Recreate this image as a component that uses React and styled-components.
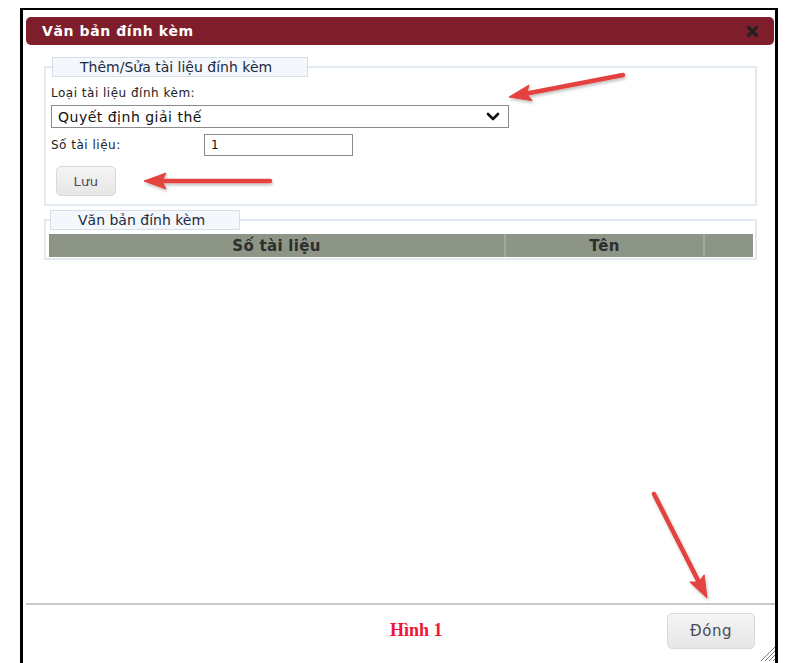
import React from "react";
import styled, { createGlobalStyle } from "styled-components";

const Global = createGlobalStyle`
  html, body { margin: 0; padding: 0; background: #fff; overflow: hidden; }
  body { font-family: "DejaVu Sans", Verdana, sans-serif; }
  * { box-sizing: border-box; }
`;

const Page = styled.div`
  position: relative;
  width: 797px;
  height: 663px;
  padding: 8px 0 0 20px;
  overflow: hidden;
`;

const Frame = styled.div`
  width: 758px;
  height: 665px;
  border: 3px solid #000;
  border-top-width: 2px;
  border-bottom: none;
  display: flex;
  flex-direction: column;
  background: #fff;
`;

const TitleBar = styled.div`
  margin: 7px 1px 0 3px;
  height: 28px;
  background: #7e1e2c;
  border-radius: 5px;
  display: flex;
  align-items: center;
  justify-content: space-between;
  padding: 0 16px 0 16px;
  color: #fff;
  font-weight: bold;
  font-size: 14px;
  letter-spacing: 0.6px;
`;

const CloseIcon = styled.svg`
  width: 11px;
  height: 11px;
  display: block;
`;

const Body = styled.div`
  flex: 1;
  padding-top: 12px;
  display: flex;
  flex-direction: column;
`;

const Group = styled.fieldset`
  margin: ${(p) => p.$mt || 0}px 18px 0 21px;
  padding: ${(p) => p.$pad};
  border: 2px solid #e2e9f0;
  min-width: 0;
`;

const Legend = styled.legend`
  margin-left: 1px;
  width: ${(p) => p.$w}px;
  height: 20px;
  padding: 0 0 0 27px;
  border: 1px solid #d6dfe9;
  background: #f4f7fb;
  color: #1c2b40;
  font-size: 14px;
  line-height: 18px;
`;

const Label = styled.div`
  font-size: 12px;
  letter-spacing: 0.5px;
  line-height: 14px;
  color: #222;
`;

const Select = styled.div`
  margin-top: 5px;
  width: 458px;
  height: 23px;
  border: 1px solid #8b8b8b;
  display: flex;
  align-items: center;
  justify-content: space-between;
  padding: 0 8px 0 6px;
  font-size: 14px;
  letter-spacing: 0.5px;
  color: #111;
`;

const Chevron = styled.svg`
  width: 14px;
  height: 9px;
  display: block;
`;

const FieldRow = styled.div`
  margin-top: 6px;
  display: flex;
  align-items: center;
`;

const RowLabel = styled(Label)`
  width: 153px;
`;

const TextInput = styled.div`
  width: 149px;
  height: 22px;
  border: 1px solid #8b8b8b;
  padding: 0 6px;
  font-size: 12px;
  line-height: 20px;
  color: #111;
`;

const Button = styled.button`
  width: ${(p) => p.$w}px;
  height: ${(p) => p.$h}px;
  margin: ${(p) => p.$m || 0};
  border: 1px solid #d9d9d9;
  border-radius: 5px;
  background: linear-gradient(#f4f4f4, #e6e6e6);
  font-family: "DejaVu Sans", Verdana, sans-serif;
  font-size: ${(p) => p.$fs}px;
  letter-spacing: 0.5px;
  color: #4a4a58;
  padding: 0;
  display: flex;
  align-items: center;
  justify-content: center;
  cursor: pointer;
`;

const Table = styled.div`
  display: grid;
  grid-template-columns: 457px 199px 48px;
  height: 23px;
  background: #8c9586;
`;

const HeadCell = styled.div`
  display: flex;
  align-items: center;
  justify-content: center;
  font-size: 15px;
  letter-spacing: 0.3px;
  font-weight: bold;
  color: #2e2e2e;
  border-right: 2px solid #a1a99c;
  &:last-child { border-right: none; }
`;

const Footer = styled.div`
  height: 70px;
  margin-left: 3px;
  border-top: 2px solid #c9c9c9;
  display: flex;
  align-items: flex-start;
  padding: 8px 20px 0 0;
`;

const Caption = styled.div`
  margin: 7px 0 0 364px;
  font-family: "Liberation Serif", "Times New Roman", serif;
  font-weight: bold;
  font-size: 18px;
  color: #ee1535;
`;

const Spacer = styled.div`
  flex: 1;
`;

const Grip = styled.svg`
  position: absolute;
  left: 759px;
  top: 645px;
  width: 17px;
  height: 17px;
`;

const Annotations = styled.svg`
  position: absolute;
  left: 0;
  top: 0;
  width: 797px;
  height: 663px;
  pointer-events: none;
  overflow: visible;
`;

function Arrow({ x1, y1, x2, y2 }) {
  const dx = x2 - x1;
  const dy = y2 - y1;
  const len = Math.hypot(dx, dy);
  const ux = dx / len;
  const uy = dy / len;
  const hl = 22;
  const hw = 8;
  const bx = x2 - ux * hl;
  const by = y2 - uy * hl;
  const px = -uy;
  const py = ux;
  const pts = `${x2},${y2} ${bx + px * hw},${by + py * hw} ${bx + ux * 4},${by + uy * 4} ${bx - px * hw},${by - py * hw}`;
  return (
    <g filter="url(#shadow)">
      <line x1={x1} y1={y1} x2={bx + ux * 5} y2={by + uy * 5} stroke="#e3433f" strokeWidth="4.5" strokeLinecap="round" />
      <polygon points={pts} fill="#e3433f" stroke="#e3433f" strokeWidth="1" strokeLinejoin="round" />
    </g>
  );
}

export default function App() {
  return (
    <Page>
      <Global />
      <Frame>
        <TitleBar>
          <span>Văn bản đính kèm</span>
          <CloseIcon viewBox="0 0 11 11">
            <path d="M1.5 1.5 L9.5 9.5 M9.5 1.5 L1.5 9.5" stroke="#222" strokeWidth="3.2" strokeLinecap="round" />
          </CloseIcon>
        </TitleBar>
        <Body>
          <Group $pad="9px 0 8px 5px">
            <Legend $w={256}>Thêm/Sửa tài liệu đính kèm</Legend>
            <Label>Loại tài liệu đính kèm:</Label>
            <Select>
              <span>Quyết định giải thế</span>
              <Chevron viewBox="0 0 14 9">
                <path d="M2 2 L7 7 L12 2" fill="none" stroke="#111" strokeWidth="2.6" strokeLinecap="round" strokeLinejoin="round" />
              </Chevron>
            </Select>
            <FieldRow>
              <RowLabel>Số tài liệu:</RowLabel>
              <TextInput>1</TextInput>
            </FieldRow>
            <Button $w={60} $h={30} $fs={13} $m="10px 0 0 5px">Lưu</Button>
          </Group>
          <Group $mt={4} $pad="4px 2px 1px 3px">
            <Legend $w={190}>Văn bản đính kèm</Legend>
            <Table>
              <HeadCell>Số tài liệu</HeadCell>
              <HeadCell>Tên</HeadCell>
              <HeadCell />
            </Table>
          </Group>
        </Body>
        <Footer>
          <Caption>Hình 1</Caption>
          <Spacer />
          <Button $w={88} $h={36} $fs={15}>Đóng</Button>
        </Footer>
      </Frame>
      <Grip viewBox="0 0 17 17">
        <path d="M2 16 L16 2 M6 16 L16 6 M10 16 L16 10 M14 16 L16 14" stroke="#777" strokeWidth="1" />
      </Grip>
      <Annotations viewBox="0 0 797 663">
        <defs>
          <filter id="shadow" x="-20%" y="-20%" width="140%" height="140%">
            <feDropShadow dx="1" dy="2" stdDeviation="1.5" floodColor="#000" floodOpacity="0.25" />
          </filter>
        </defs>
        <Arrow x1={623} y1={75} x2={509} y2={97} />
        <Arrow x1={270} y1={181} x2={144} y2={181} />
        <Arrow x1={654} y1={494} x2={707} y2={598} />
      </Annotations>
    </Page>
  );
}
